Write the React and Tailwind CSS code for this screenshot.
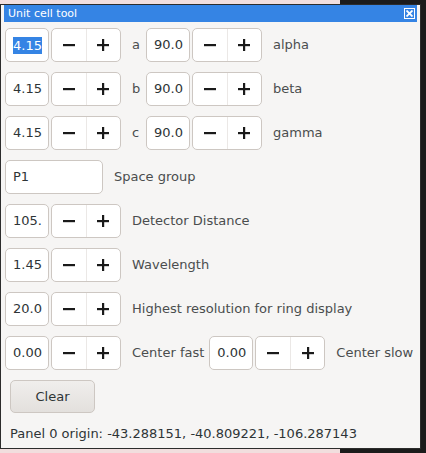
import React from 'react';

const font = { fontFamily: '"DejaVu Sans", "Liberation Sans", sans-serif' };

function Minus() {
  return (
    <svg width="12" height="12" viewBox="0 0 12 12">
      <rect x="0" y="5" width="12" height="2.2" fill="#1a1a1a" />
    </svg>
  );
}

function Plus() {
  return (
    <svg width="12" height="12" viewBox="0 0 12 12">
      <rect x="0" y="5" width="12" height="2.2" fill="#1a1a1a" />
      <rect x="5" y="0" width="2.2" height="12" fill="#1a1a1a" />
    </svg>
  );
}

function Field({ value, selected, wide }) {
  return (
    <div
      className={`h-[34px] ${wide ? 'w-[98px]' : 'w-[44px]'} shrink-0 rounded-[5px] border border-[#cdc7c2] bg-white flex items-center pl-[7px] text-[13px] text-[#2e3436] overflow-hidden`}
    >
      {selected ? <span className="bg-[#3584e4] text-white leading-[17px]">{value}</span> : value}
    </div>
  );
}

function Stepper() {
  return (
    <div className="ml-[2px] h-[34px] w-[70px] shrink-0 flex rounded-[5px] border border-[#cdc7c2] bg-white">
      <div className="flex-1 flex items-center justify-center border-r border-[#ebe8e6]">
        <Minus />
      </div>
      <div className="flex-1 flex items-center justify-center">
        <Plus />
      </div>
    </div>
  );
}

function Label({ children, className = '' }) {
  return <span className={`text-[13px] text-[#4a4d4e] whitespace-nowrap ${className}`}>{children}</span>;
}

function CellRow({ v, letter, ang, angName, selected }) {
  return (
    <div className="flex items-center">
      <Field value={v} selected={selected} />
      <Stepper />
      <Label className="ml-[11px] w-[14px]">{letter}</Label>
      <Field value={ang} />
      <Stepper />
      <Label className="ml-[11px]">{angName}</Label>
    </div>
  );
}

function SingleRow({ v, label }) {
  return (
    <div className="flex items-center">
      <Field value={v} />
      <Stepper />
      <Label className="ml-[11px]">{label}</Label>
    </div>
  );
}

export default function App() {
  return (
    <div className="relative w-[426px] h-[453px] bg-[#1b1b1b] overflow-hidden" style={font}>
      <div className="absolute left-0 top-0 w-[340px] h-[4px] bg-[#f1dede]" />
      <div className="absolute left-0 bottom-0 w-[340px] h-[4px] bg-[#f1dede]" />
      <div className="relative mt-[4px] w-[421px] h-[445px] border border-[#2c2c2c] bg-[#f6f5f4] pt-0 px-[3px] flex flex-col">
        <div className="h-[17px] bg-[#3584e4] flex items-center justify-between pl-[4px] pr-[2px]">
          <span className="text-[11px] text-white leading-none">Unit cell tool</span>
          <div className="w-[11px] h-[11px] border border-white flex items-center justify-center">
            <svg width="7" height="7" viewBox="0 0 7 7">
              <path d="M0.5 0.5 L6.5 6.5 M6.5 0.5 L0.5 6.5" stroke="white" strokeWidth="1.8" />
            </svg>
          </div>
        </div>
        <div className="flex flex-col gap-[10px] pt-[6px] pl-[1px]">
          <CellRow v="4.15" letter="a" ang="90.0" angName="alpha" selected />
          <CellRow v="4.15" letter="b" ang="90.0" angName="beta" />
          <CellRow v="4.15" letter="c" ang="90.0" angName="gamma" />
          <div className="flex items-center">
            <Field value="P1" wide />
            <Label className="ml-[11px]">Space group</Label>
          </div>
          <SingleRow v="105." label="Detector Distance" />
          <SingleRow v="1.45" label="Wavelength" />
          <SingleRow v="20.0" label="Highest resolution for ring display" />
          <div className="flex items-center">
            <Field value="0.00" />
            <Stepper />
            <Label className="ml-[11px]">Center fast</Label>
            <div className="ml-[5px] flex items-center">
              <Field value="0.00" />
              <Stepper />
            </div>
            <Label className="ml-[11px]">Center slow</Label>
          </div>
        </div>
        <div className="pl-[6px] pt-[10px]">
          <button className="h-[33px] w-[85px] rounded-[5px] border border-[#cdc7c2] bg-gradient-to-b from-[#f0eeec] to-[#e3e0dd] text-[13px] text-[#2e3436]">
            Clear
          </button>
        </div>
        <div className="pl-[6px] pt-[11px] text-[13px] text-[#2e3436]">
          Panel 0 origin: -43.288151, -40.809221, -106.287143
        </div>
      </div>
    </div>
  );
}
